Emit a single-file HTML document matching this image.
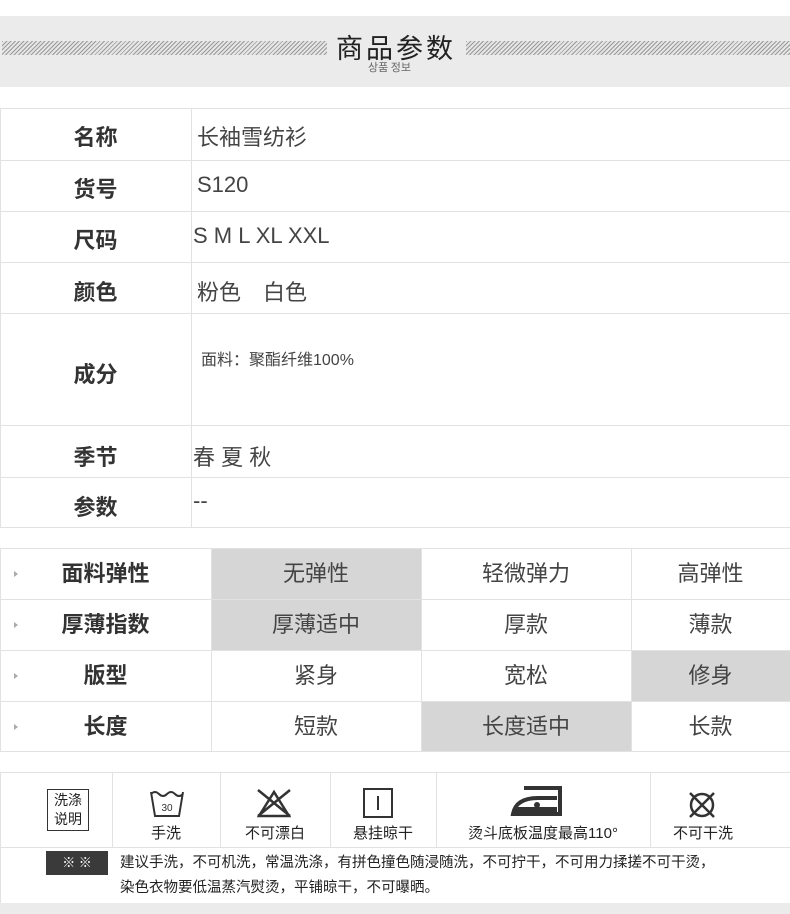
<!DOCTYPE html>
<html><head><meta charset="utf-8"><style>
*{margin:0;padding:0;box-sizing:border-box}
body{width:790px;height:914px;background:#fff;position:relative;overflow:hidden;font-family:"Liberation Sans","Noto Sans CJK SC",sans-serif;color:#333}
.a{position:absolute}
.hatch{background:repeating-linear-gradient(135deg,#9a9a9a 0 1px,#e6e6e6 1px 3px)}
.hl{position:absolute;left:0;width:790px;height:1px;background:#e2e2e2}
.vl{position:absolute;width:1px;background:#e2e2e2}
.lab{position:absolute;left:0;width:191px;text-align:center;font-weight:bold;font-size:22px;color:#333}
.val{position:absolute;left:197px;font-size:22px;color:#444}
.c{position:absolute;text-align:center;font-size:22px;color:#444;height:50px;line-height:50px}
.g{background:#d6d6d6}
.b{font-weight:bold;color:#333}
.tri{position:absolute;left:14px;width:0;height:0;border-left:4px solid #aaa;border-top:3px solid transparent;border-bottom:3px solid transparent}
.ic{position:absolute;top:822px;font-size:15px;color:#222;text-align:center}
</style></head><body>
<div class="a" style="left:0;top:16px;width:790px;height:71px;background:#ebebeb"></div>
<div class="a hatch" style="left:2px;top:41px;width:325px;height:14px"></div>
<div class="a hatch" style="left:466px;top:41px;width:324px;height:14px"></div>
<div class="a" style="left:336px;top:27px;font-size:27px;color:#222;letter-spacing:3px">商品参数</div>
<div class="a" style="left:368px;top:59px;font-size:11px;color:#666;font-family:'Noto Sans CJK KR',sans-serif">상품 정보</div>

<div class="hl" style="top:108px"></div><div class="hl" style="top:160px"></div><div class="hl" style="top:211px"></div><div class="hl" style="top:262px"></div><div class="hl" style="top:313px"></div><div class="hl" style="top:425px"></div><div class="hl" style="top:477px"></div><div class="hl" style="top:527px"></div>
<div class="vl" style="left:0;top:108px;height:420px"></div>
<div class="vl" style="left:191px;top:108px;height:420px"></div>
<div class="lab" style="top:120px">名称</div><div class="val" style="top:120px">长袖雪纺衫</div>
<div class="lab" style="top:172px">货号</div><div class="val" style="top:172px">S120</div>
<div class="lab" style="top:223px">尺码</div><div class="val" style="top:223px;left:193px">S M L XL XXL</div>
<div class="lab" style="top:275px">颜色</div><div class="val" style="top:275px">粉色　白色</div>
<div class="lab" style="top:357px">成分</div><div class="val" style="top:346px;left:201px;font-size:16px">面料：聚酯纤维100%</div>
<div class="lab" style="top:440px">季节</div><div class="val" style="top:440px;left:193px">春 夏 秋</div>
<div class="lab" style="top:490px">参数</div><div class="val" style="top:488px;left:193px">--</div>

<div class="a g" style="left:211px;top:548px;width:210px;height:102px"></div>
<div class="a g" style="left:631px;top:650px;width:159px;height:51px"></div>
<div class="a g" style="left:421px;top:701px;width:210px;height:50px"></div>
<div class="hl" style="top:548px"></div><div class="hl" style="top:599px"></div><div class="hl" style="top:650px"></div><div class="hl" style="top:701px"></div><div class="hl" style="top:751px"></div>
<div class="vl" style="left:0;top:548px;height:204px"></div>
<div class="vl" style="left:211px;top:548px;height:204px"></div>
<div class="vl" style="left:421px;top:548px;height:204px"></div>
<div class="vl" style="left:631px;top:548px;height:204px"></div>
<div class="tri" style="top:571px"></div><div class="tri" style="top:622px"></div><div class="tri" style="top:673px"></div><div class="tri" style="top:724px"></div>
<div class="c b" style="left:0;width:211px;top:549px">面料弹性</div><div class="c" style="left:211px;width:210px;top:549px">无弹性</div><div class="c" style="left:421px;width:210px;top:549px">轻微弹力</div><div class="c" style="left:631px;width:159px;top:549px">高弹性</div>
<div class="c b" style="left:0;width:211px;top:600px">厚薄指数</div><div class="c" style="left:211px;width:210px;top:600px">厚薄适中</div><div class="c" style="left:421px;width:210px;top:600px">厚款</div><div class="c" style="left:631px;width:159px;top:600px">薄款</div>
<div class="c b" style="left:0;width:211px;top:651px">版型</div><div class="c" style="left:211px;width:210px;top:651px">紧身</div><div class="c" style="left:421px;width:210px;top:651px">宽松</div><div class="c" style="left:631px;width:159px;top:651px">修身</div>
<div class="c b" style="left:0;width:211px;top:702px">长度</div><div class="c" style="left:211px;width:210px;top:702px">短款</div><div class="c" style="left:421px;width:210px;top:702px">长度适中</div><div class="c" style="left:631px;width:159px;top:702px">长款</div>

<div class="hl" style="top:772px"></div><div class="hl" style="top:847px"></div>
<div class="vl" style="left:0;top:772px;height:132px"></div>
<div class="vl" style="left:112px;top:772px;height:75px"></div><div class="vl" style="left:220px;top:772px;height:75px"></div><div class="vl" style="left:330px;top:772px;height:75px"></div><div class="vl" style="left:436px;top:772px;height:75px"></div><div class="vl" style="left:650px;top:772px;height:75px"></div>
<div class="a" style="left:47px;top:789px;width:42px;height:42px;border:1px solid #333;font-size:14px;line-height:19px;text-align:center;padding-top:1px;color:#222">洗涤<br>说明</div>
<svg class="a" style="left:149px;top:789px" width="36" height="30"><path d="M2 3 L6 27 H30 L34 3 M2 5 q4 -4 8 0 q4 4 8 0 q4 -4 8 0 q4 4 8 0" fill="none" stroke="#333" stroke-width="2"/><text x="18" y="22" font-size="10" text-anchor="middle" fill="#333">30</text></svg>
<div class="ic" style="left:112px;width:108px">手洗</div>
<svg class="a" style="left:254px;top:786px" width="40" height="34"><path d="M20 6 L5 30 H35 Z M4 4 L36 30 M36 4 L4 30" fill="none" stroke="#333" stroke-width="2.5"/></svg>
<div class="ic" style="left:220px;width:110px">不可漂白</div>
<svg class="a" style="left:362px;top:787px" width="32" height="32"><rect x="2" y="2" width="28" height="28" fill="none" stroke="#333" stroke-width="2"/><path d="M16 9 V23" stroke="#333" stroke-width="2"/></svg>
<div class="ic" style="left:330px;width:106px">悬挂晾干</div>
<svg class="a" style="left:510px;top:785px" width="54" height="32"><path d="M14 3 H50 V29 H3 Q6 13 28 13 H47" fill="none" stroke="#333" stroke-width="4"/><path d="M3 29 L8 22 H47 V29 Z" fill="#333"/><circle cx="27" cy="21" r="3" fill="#333"/><path d="M10 20 Q16 16 28 16 H47 V22 H8 Z" fill="#fff"/><circle cx="27" cy="20" r="3" fill="#333"/></svg>
<div class="ic" style="left:436px;width:214px">烫斗底板温度最高110°</div>
<svg class="a" style="left:686px;top:789px" width="32" height="32"><circle cx="16" cy="16" r="11" fill="none" stroke="#333" stroke-width="2.5"/><path d="M4 4 L28 28 M28 4 L4 28" stroke="#333" stroke-width="2.5"/></svg>
<div class="ic" style="left:650px;width:106px">不可干洗</div>
<div class="a" style="left:46px;top:851px;width:62px;height:24px;background:#3a3a3a;color:#fff;font-size:13px;line-height:24px;text-align:center">※ ※</div>
<div class="a" style="left:120px;top:851px;font-size:14.5px;line-height:25px;color:#222;width:670px">建议手洗，不可机洗，常温洗涤，有拼色撞色随浸随洗，不可拧干，不可用力揉搓不可干烫，<br>染色衣物要低温蒸汽熨烫，平铺晾干，不可曝晒。</div>
<div class="a" style="left:0;top:903px;width:790px;height:11px;background:#ebebeb"></div>
</body></html>
